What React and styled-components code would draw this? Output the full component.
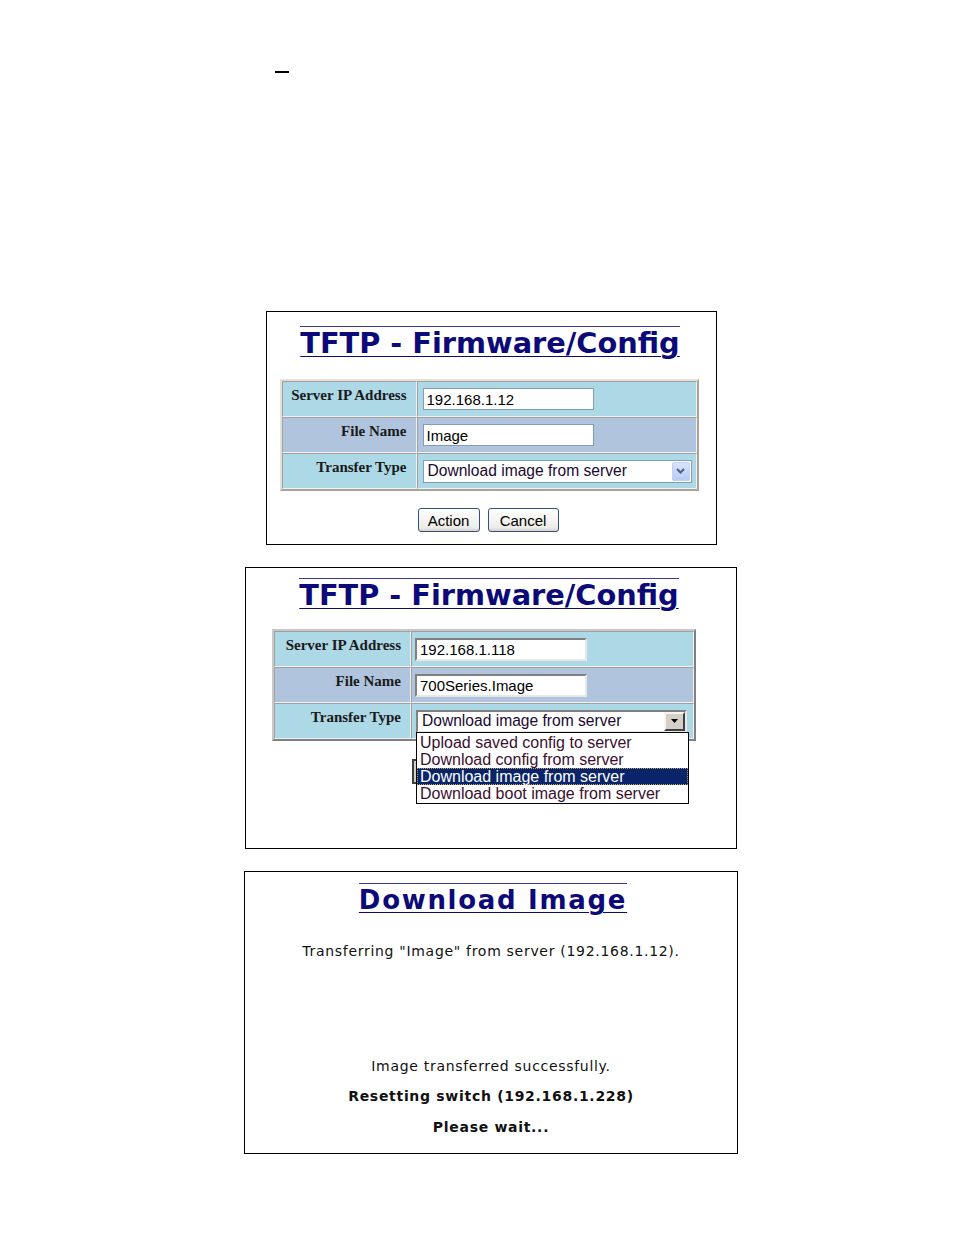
import React from 'react';
import styled, { createGlobalStyle } from 'styled-components';

const GlobalStyle = createGlobalStyle`
  html, body {
    margin: 0;
    padding: 0;
    background: #ffffff;
  }
  body {
    font-family: "Liberation Sans", Arial, sans-serif;
  }
`;

const options = [
  'Upload saved config to server',
  'Download config from server',
  'Download image from server',
  'Download boot image from server',
];

const TftpForm = ({ classic, ip, file, open }) =>
  <FormTable $classic={classic}>
    <colgroup>
      <col style={{ width: classic ? 137 : 135 }} />
      <col />
    </colgroup>
    <tbody>
      <Row $alt={false}>
        <Label $classic={classic}>Server IP Address</Label>
        <Value $classic={classic}>
          <TextInput $classic={classic} defaultValue={ip} />
        </Value>
      </Row>
      <Row $alt>
        <Label $classic={classic}>File Name</Label>
        <Value $classic={classic}>
          <TextInput $classic={classic} defaultValue={file} />
        </Value>
      </Row>
      <Row $alt={false}>
        <Label $classic={classic}>Transfer Type</Label>
        <Value $classic={classic}>
          <SelectBox $classic={classic}>
            <SelectText>Download image from server</SelectText>
            {classic ? (
              <ClassicArrow>
                <svg width="8" height="4" viewBox="0 0 8 4">
                  <path d="M0 0h7L3.5 4z" fill="#000" />
                </svg>
              </ClassicArrow>
            ) : (
              <XpArrow>
                <svg width="9" height="6" viewBox="0 0 9 6">
                  <path d="M1 1l3.5 3.5L8 1" stroke="#4d6185" strokeWidth="2" fill="none" />
                </svg>
              </XpArrow>
            )}
            {open &&
              <DropList>
                {options.map(o =>
                  <DropItem key={o} $active={o === 'Download image from server'}>{o}</DropItem>
                )}
              </DropList>}
          </SelectBox>
        </Value>
      </Row>
    </tbody>
  </FormTable>;

const App = () =>
  <>
    <GlobalStyle />
    <Page>
      <Dash />
      <Column>
        <Panel $w={451} $h={234} $pad={14}>
          <Title $size={28.8} $shift={2}>TFTP - Firmware/Config</Title>
          <FormWrap $top={22} $shift={4}>
            <TftpForm ip="192.168.1.12" file="Image" />
          </FormWrap>
          <Buttons $top={17} $shift={6}>
            <XpButton $w={62}>Action</XpButton>
            <XpButton $w={71}>Cancel</XpButton>
          </Buttons>
        </Panel>

        <Panel $w={492} $h={282} $pad={10}>
          <Title $size={28.8} $shift={4}>TFTP - Firmware/Config</Title>
          <FormWrap $top={20} $shift={14}>
            <TftpForm classic open ip="192.168.1.118" file="700Series.Image" />
          </FormWrap>
          <Buttons $top={18} $shift={0}>
            <ClassicButton>Action</ClassicButton>
            <ClassicButton>Cancel</ClassicButton>
          </Buttons>
        </Panel>

        <Panel $w={494} $h={283} $pad={11}>
          <Title $size={26} $spacing={1.7} $shift={-4}>Download Image</Title>
          <Message $top={29}>Transferring "Image" from server (192.168.1.12).</Message>
          <Message $top={99}>Image transferred successfully.</Message>
          <Message $top={14} $bold>Resetting switch (192.168.1.228)</Message>
          <Message $top={15} $bold>Please wait...</Message>
        </Panel>
      </Column>
    </Page>
  </>;

const Page = styled.div`
  width: 954px;
  min-height: 1235px;
  padding-top: 71px;
  box-sizing: border-box;
`;

const Dash = styled.div`
  width: 14px;
  height: 2px;
  margin-left: 275px;
  background: #000;
`;

const Column = styled.div`
  width: 492px;
  margin: 238px 0 0 245px;
  display: flex;
  flex-direction: column;
  align-items: center;
  gap: 22px;
`;

const Panel = styled.div`
  position: relative;
  width: ${p => p.$w}px;
  height: ${p => p.$h}px;
  box-sizing: border-box;
  border: 1px solid #000;
  padding-top: ${p => p.$pad}px;
  display: flex;
  flex-direction: column;
  align-items: center;
`;

const Title = styled.div`
  display: inline-block;
  margin-right: ${p => p.$shift || 0}px;
  border-top: 1px solid #3838a0;
  font-family: "DejaVu Sans", Verdana, sans-serif;
  font-weight: 700;
  font-size: ${p => p.$size}px;
  letter-spacing: ${p => p.$spacing || 0}px;
  line-height: 28px;
  color: #0c0a78;
  text-decoration: underline;
  text-decoration-thickness: 1px;
  text-underline-offset: 3px;
  padding-top: 2px;
`;

const FormWrap = styled.div`
  margin-top: ${p => p.$top}px;
  margin-right: ${p => p.$shift}px;
`;

const FormTable = styled.table`
  border-collapse: separate;
  border-spacing: 0;
  table-layout: fixed;
  box-sizing: border-box;
  width: ${p => (p.$classic ? 424 : 419)}px;
  border: 2px solid;
  border-color: ${p => (p.$classic ? '#c8c8c8 #808080 #808080 #c8c8c8' : '#e4e0d4 #a8a498 #a8a498 #e4e0d4')};
`;

const Row = styled.tr`
  background: ${p => (p.$alt ? '#b0c4de' : '#add8e6')};
`;

const Label = styled.td`
  height: 36px;
  box-sizing: border-box;
  padding: 5px 9px 0 0;
  vertical-align: top;
  text-align: right;
  white-space: nowrap;
  font-family: "Liberation Serif", "Times New Roman", serif;
  font-weight: 700;
  font-size: 15px;
  line-height: 17px;
  color: #1a1a1a;
  border: 1px solid;
  border-color: #a0a0a0 #f0f0f0 #f0f0f0 #a0a0a0;
`;

const Value = styled.td`
  height: 36px;
  box-sizing: border-box;
  padding: 0 ${p => (p.$classic ? 3 : 5)}px;
  vertical-align: middle;
  border: 1px solid;
  border-color: #a0a0a0 #f0f0f0 #f0f0f0 #a0a0a0;
`;

const TextInput = styled.input`
  display: block;
  width: ${p => (p.$classic ? 172 : 171)}px;
  height: ${p => (p.$classic ? 23 : 22)}px;
  box-sizing: border-box;
  margin: 0;
  padding: 1px 3px 0;
  font-family: "Liberation Sans", Arial, sans-serif;
  font-size: 15px;
  color: #000;
  background: #fff;
  outline: none;
  border: ${p => (p.$classic ? '2px solid' : '1px solid #7f9db9')};
  ${p => p.$classic && 'border-color: #808080 #e8e8e8 #e8e8e8 #808080;'}
`;

const SelectBox = styled.div`
  position: relative;
  display: flex;
  align-items: center;
  width: ${p => (p.$classic ? 271 : 269)}px;
  height: 23px;
  box-sizing: border-box;
  margin-left: ${p => (p.$classic ? 1 : 0)}px;
  background: #fff;
  border: ${p => (p.$classic ? '2px solid' : '1px solid #7f9db9')};
  ${p => p.$classic && 'border-color: #808080 #e8e8e8 #e8e8e8 #808080;'}
`;

const SelectText = styled.span`
  flex: 1;
  padding-left: 4px;
  font-size: 15.6px;
  color: #1a0a30;
  white-space: nowrap;
`;

const XpArrow = styled.div`
  width: 18px;
  height: 19px;
  margin-right: 1px;
  box-sizing: border-box;
  border: 1px solid #bfcff5;
  border-radius: 2px;
  background: linear-gradient(#dae5fb, #b7cbf5);
  display: flex;
  align-items: center;
  justify-content: center;
`;

const ClassicArrow = styled.div`
  width: 21px;
  height: 19px;
  box-sizing: border-box;
  border: 2px solid;
  border-color: #f4f4f4 #404040 #404040 #f4f4f4;
  background: #d4d0c8;
  display: flex;
  align-items: center;
  justify-content: center;
`;

const DropList = styled.div`
  position: absolute;
  top: 20px;
  left: -2px;
  z-index: 2;
  width: 273px;
  box-sizing: border-box;
  border: 1px solid #000;
  background: #fff;
  padding: 1px 0;
`;

const DropItem = styled.div`
  height: 17px;
  line-height: 17px;
  padding-left: 3px;
  font-size: 16px;
  white-space: nowrap;
  color: ${p => (p.$active ? '#fff' : '#3a1030')};
  background: ${p => (p.$active ? '#0a246a' : 'transparent')};
  ${p => p.$active && 'outline: 1px dotted #c0a060; outline-offset: -1px;'}
`;

const Buttons = styled.div`
  display: flex;
  gap: 8px;
  margin-top: ${p => p.$top}px;
  margin-right: ${p => p.$shift}px;
`;

const XpButton = styled.button`
  width: ${p => p.$w}px;
  height: 24px;
  padding: 0;
  font-family: "Liberation Sans", Arial, sans-serif;
  font-size: 15px;
  color: #000;
  border: 1px solid #2f4f7f;
  border-radius: 3px;
  background: linear-gradient(#ffffff, #ecebe6 85%, #d6d0c5);
`;

const ClassicButton = styled.button`
  width: 75px;
  height: 25px;
  padding: 0;
  font-family: "Liberation Sans", Arial, sans-serif;
  font-size: 15px;
  border: 2px solid #404040;
  background: #d4d0c8;
`;

const Message = styled.div`
  margin-top: ${p => p.$top}px;
  font-family: "DejaVu Sans", Verdana, sans-serif;
  font-size: 14px;
  font-weight: ${p => (p.$bold ? 700 : 400)};
  letter-spacing: 0.7px;
  line-height: 16px;
  color: #111;
`;

export default App;
